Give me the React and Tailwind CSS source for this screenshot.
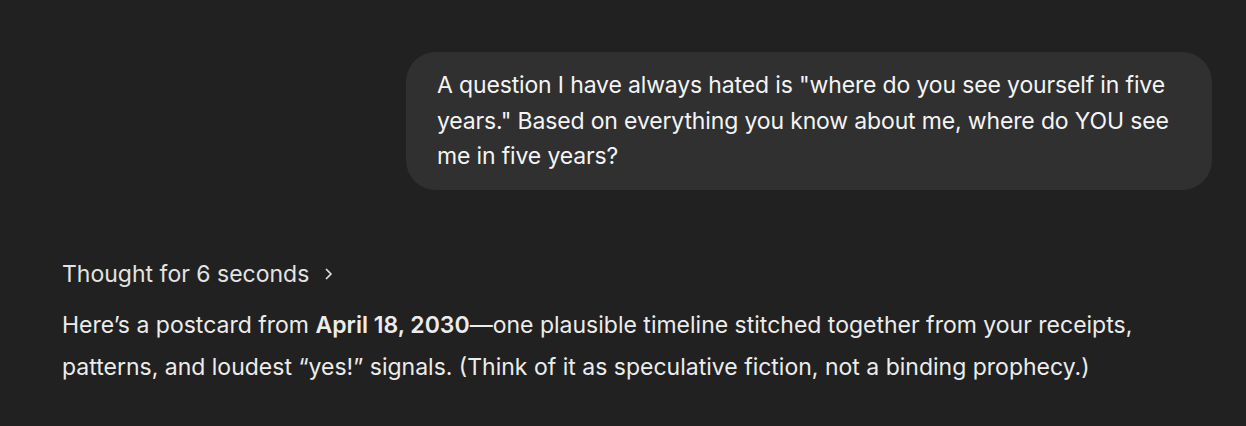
export default function App() {
  return (
    <div className="w-full bg-[#212121] text-[#ececec] overflow-hidden h-[426px]" style={{ fontFamily: 'Inter, "Noto Sans", sans-serif' }}>
      <div className="pt-[52px] pr-[34px] pl-[62px]">
        {/* User message */}
        <div className="flex justify-end">
          <div className="w-[806px] rounded-[30px] bg-[#303030] pl-[31px] pr-[28px] pt-[16px] pb-[15px] text-[23px] leading-[35.5px] tracking-[-0.15px] text-[#f4f4f4]">
            A question I have always hated is "where do you see yourself in five years." Based on everything you know about me, where do YOU see me in five years?
          </div>
        </div>

        {/* Assistant */}
        <div className="mt-[66px]">
          <button className="flex items-center gap-[14px] text-[23px] leading-[36px] text-[#e3e3e3]">
            <span>Thought for 6 seconds</span>
            <svg width="12" height="14" viewBox="0 0 12 14" fill="none" stroke="currentColor" strokeWidth="1.7" strokeLinecap="round" strokeLinejoin="round">
              <path d="M3.5 2.5l4.5 4.5-4.5 4.5" />
            </svg>
          </button>
          <p className="mt-[12px] text-[23px] leading-[42px] text-[#ececec]">
            Here’s a postcard from <strong className="font-semibold">April 18, 2030</strong>—one plausible timeline stitched together from your receipts, patterns, and loudest “yes!” signals. (Think of it as speculative fiction, not a binding prophecy.)
          </p>
        </div>
      </div>
    </div>
  );
}
